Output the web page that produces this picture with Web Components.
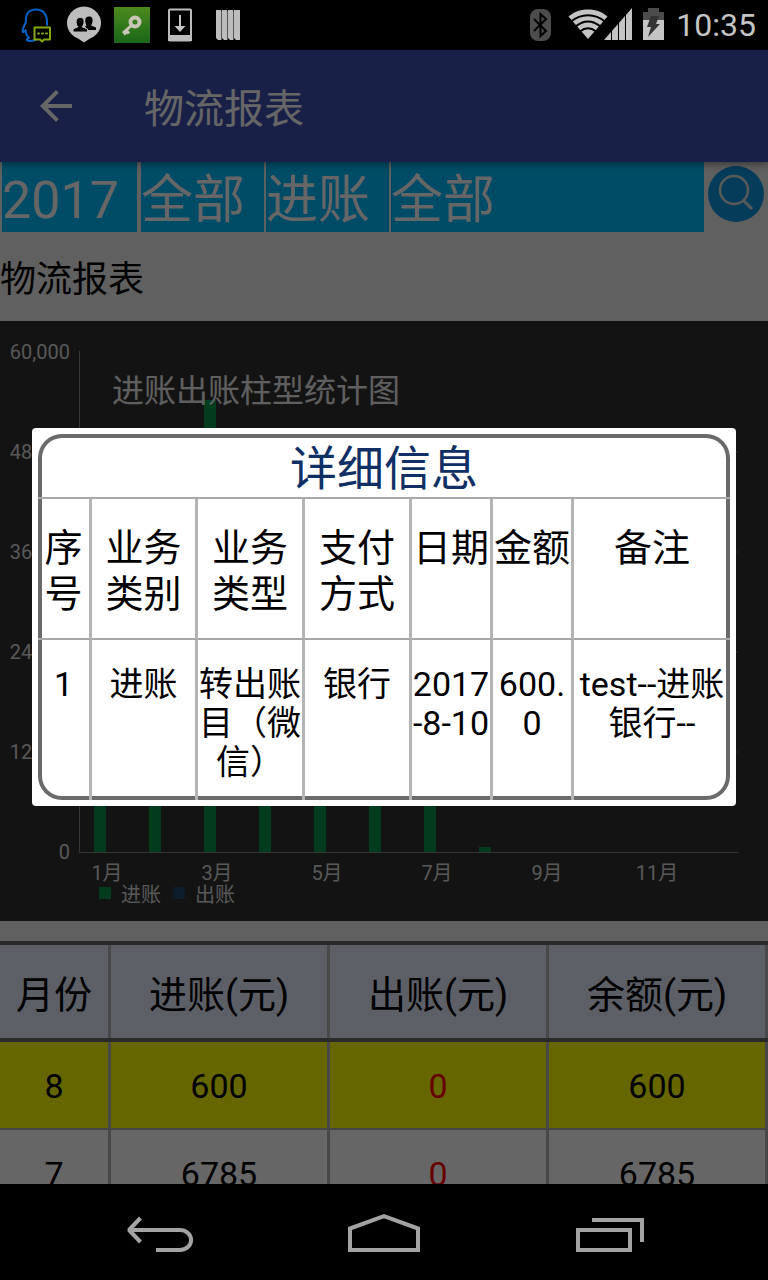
<!DOCTYPE html>
<html lang="zh-CN">
<head>
<meta charset="utf-8">
<meta name="viewport" content="width=device-width, initial-scale=1">
<title>物流报表</title>
<style>
  html, body { margin: 0; height: 100%; background: #000; }
  body { font-family: Roboto, "Noto Sans CJK SC", sans-serif; color: #000; }
</style>
</head>
<body>
<phone-screen>
  <status-bar slot="status">10:35</status-bar>
  <app-bar>物流报表</app-bar>
  <filter-bar></filter-bar>
  <section-title>物流报表</section-title>
  <bar-chart></bar-chart>
  <summary-table></summary-table>
  <detail-dialog slot="dialog">详细信息</detail-dialog>
  <nav-bar slot="nav"></nav-bar>
</phone-screen>

<script>
function define(name, html) {
  const template = document.createElement('template');
  template.innerHTML = html;
  customElements.define(name, class extends HTMLElement {
    constructor() {
      super();
      this.attachShadow({ mode: 'open' }).append(template.content.cloneNode(true));
    }
  });
}

define('phone-screen', `
<style>
  :host { display: flex; flex-direction: column; height: 100vh; overflow: hidden; }
  main { flex: 1; min-height: 0; position: relative; overflow: hidden; background: #efefef; }
</style>
<slot name="status"></slot>
<main><slot></slot><slot name="dialog"></slot></main>
<slot name="nav"></slot>`);

define('status-bar', `
<style>
  :host { display: flex; align-items: center; justify-content: space-between; height: 50px; padding: 0 12px; background: #000; color: #c4c4c4; }
  div { display: flex; align-items: center; }
  .system { gap: 10px; }
  svg { display: block; }
  time { font-size: 32px; line-height: 50px; }
</style>
<div>
  <svg width="48" height="50" fill="none" stroke-linecap="round" stroke-linejoin="round">
    <path d="M14 22C13 14 17 9.500 24 9.500s11 5 11 12M14 22c-1 2-3 5-3.500 9 0 2 1.500 1 3-1 0 4 1.500 6 3.500 8-3 1-3 3 1 3 2 0 4-.5 6-1.500M35 21v4" stroke="#0a61c4" stroke-width="2"/>
    <path d="M22.500 27.500h15.500v12h-6l-2 2-2-2h-5.500z" stroke="#85a80c" stroke-width="2"/>
    <path d="M26 33.500h1M30 33.500h1M34 33.500h1" stroke="#85a80c" stroke-width="2"/>
  </svg>
  <svg width="48" height="50">
    <path d="M24 42.500l-6-4A17 16.500 0 1 1 30 38.500z" fill="#bdbdbd"/>
    <path d="M29 16.500c3 0 4 2 3.500 5-.3 2-1 3-1.500 4l5 2v2.500h-8l-3-3.500 1.500-1c-1.500-3-2.500-9 2.500-9z" fill="#000"/>
    <path d="M20 17.500c4 0 4.500 3 3.800 6-.3 1.500-1 2.500-1.800 3.300l5.500 2.200V32H13v-3l5-2.200c-3-3-2.500-9.300 2-9.300z" fill="#000" stroke="#bdbdbd" stroke-width="1"/>
  </svg>
  <svg width="48" height="50">
    <defs><linearGradient id="g" x2="0" y2="1"><stop stop-color="#4d8a1f"/><stop offset="1" stop-color="#196718"/></linearGradient></defs>
    <path d="M6 7h36v36H6z" fill="url(#g)"/>
    <g fill="none" stroke="#c9c6b8"><circle cx="27" cy="22" r="4.500" stroke-width="4"/><path d="M24 25l-9 8M18 30l3 3.500M15.500 31.500l2.500 3" stroke-width="3"/></g>
  </svg>
  <svg width="48" height="50" fill="none">
    <rect x="13" y="9.500" width="22" height="31" rx="1" stroke="#bdbdbd" stroke-width="2"/>
    <path d="M12 35h24v6H12z" fill="#bdbdbd"/>
    <path d="M24 15v11" stroke="#c4c4c4" stroke-width="2"/>
    <path d="M18.500 26h11L24 32z" fill="#c4c4c4"/>
  </svg>
  <svg width="48" height="50">
    <path d="M12 10h5v30h-3l-2-2zM18 10h5v30h-3l-2-2zM24 10h5v30h-3l-2-2zM30 10h6v30h-4l-2-2z" fill="#bdbdbd"/>
    <path d="M17.500 11v29M23.500 11v29M29.500 11v29" stroke="#555"/>
  </svg>
</div>
<div class="system">
  <svg width="30" height="50">
    <rect x="2" y="9" width="21" height="32" rx="8" fill="#4c4c4c"/>
    <path d="M6 19l12 12-5.500 5V14l5.500 5L6 31" fill="none" stroke="#000" stroke-width="2"/>
  </svg>
  <svg width="64" height="50">
    <path d="M20 39L.5 16.500C6 12 12 9.500 20 9.500s14 2.500 19.500 7z" fill="#c4c4c4"/>
    <path d="M3 21.500c10-8.500 24-8.500 34 0M7.500 26.500c8-6.500 17-6.500 25 0M12 31.500c5-4 11-4 16 0" fill="none" stroke="#000" stroke-width="2"/>
    <path d="M64 8v32H36z" fill="#c4c4c4"/>
    <path d="M43.500 28v12M50.500 20v20M57.500 12v28" stroke="#000" stroke-width="1"/>
  </svg>
  <svg width="24" height="50">
    <path d="M1 12h5V8h11v4h5v28H1z" fill="#4c4c4c"/>
    <path d="M1 20h21v20H1z" fill="#c4c4c4"/>
    <path d="M9 16h8l-3 8h4L6 37l3-10H5z" fill="#333"/>
  </svg>
  <time><slot></slot></time>
</div>`);

define('app-bar', `
<style>
  :host { display: flex; align-items: center; position: relative; z-index: 1; height: 112px; padding: 0 32px; gap: 64px; background: #3f51b5; color: #fff; box-shadow: 0 2px 8px rgba(0, 0, 0, .45); }
  button { display: block; width: 48px; height: 48px; padding: 0; border: 0; background: none; color: inherit; }
  svg { display: block; }
  h1 { margin: 0; padding-top: 8px; font-size: 40px; line-height: 48px; font-weight: 400; }
</style>
<button aria-label="返回"><svg width="48" height="48" viewBox="0 0 24 24" fill="currentColor"><path d="M20 11H7.830l5.590-5.590L12 4l-8 8 8 8 1.410-1.410L7.830 13H20v-2z"/></svg></button>
<h1><slot></slot></h1>`);

define('filter-bar', `
<style>
  :host { display: grid; grid-template-columns: 137px 123px 123px 1fr 60px; gap: 2px; padding: 0 2px; height: 70px; }
  select { appearance: none; box-sizing: border-box; width: 100%; min-width: 0; height: 70px; margin: 0; padding: 8px 0 0; border: 0; border-radius: 0; background: #00bfff; color: #fff; font: 52px/62px Roboto, "Noto Sans CJK SC", sans-serif; }
  select:first-of-type { border-right: 2px solid #efefef; }
  button { height: 64px; padding: 4px 2px; border: 0; background: none; }
  svg { display: block; }
</style>
<select aria-label="年份"><option>2017</option></select>
<select aria-label="月份"><option>全部</option></select>
<select aria-label="类别"><option>进账</option></select>
<select aria-label="类型"><option>全部</option></select>
<button aria-label="查询"><svg width="56" height="56" fill="none"><circle cx="28" cy="28" r="28" fill="#0b96e2"/><g stroke="#dedede" stroke-width="2.500"><circle cx="26" cy="24" r="14"/><path d="M35 34l9 9" stroke-width="3"/></g></svg></button>`);

define('section-title', `
<style>
  :host { display: block; }
  h2 { margin: 0; padding-top: 8px; font-size: 36px; line-height: 81px; font-weight: 400; }
</style>
<h2><slot></slot></h2>`);

customElements.define('bar-chart', class extends HTMLElement {
  connectedCallback() {
    const income = [22000, 14000, 54200, 18500, 16000, 12500, 6785, 600];
    const base = 531, scale = 500 / 60000;
    const bars = income.map((v, i) => {
      const h = Math.max(4, Math.round(v * scale));
      return `<rect x="${94 + i * 55}" y="${base - h}" width="12" height="${h}" fill="#08944f"/>`;
    }).join('');
    const rows = ['0', '12,000', '24,000', '36,000', '48,000', '60,000'].map((t, i) =>
      `<text x="70" y="${538 - i * 100}" text-anchor="end">${t}</text>` +
      (i && i < 5 ? `<path d="M736 ${base - i * 100}h2" stroke="#666"/>` : '')).join('');
    const months = [1, 3, 5, 7, 9, 11].map((m, i) =>
      `<text x="${107 + i * 110}" y="559" text-anchor="middle">${m}月</text>`).join('');
    this.attachShadow({ mode: 'open' }).innerHTML = `
<style>
  :host { display: block; background: #303030; }
  svg { display: block; width: 100%; height: auto; font-size: 20px; fill: #dcdcdc; }
  .title { font-size: 32px; fill: #eee; }
</style>
<svg viewBox="0 0 768 600" role="img" aria-label="进账出账柱型统计图">
  <path d="M79.500 30v501.500H738" fill="none" stroke="#888"/>
  ${bars}${rows}${months}
  <text class="title" x="112" y="81">进账出账柱型统计图</text>
  <path d="M99 566h12v12H99z" fill="#08944f"/><text x="121" y="581">进账</text>
  <path d="M173 566h12v12h-12z" fill="#20486e"/><text x="195" y="581">出账</text>
</svg>`;
  }
});

define('summary-table', `
<style>
  :host { display: block; margin-top: 20px; }
  table { width: 100%; table-layout: fixed; border-collapse: separate; border-spacing: 0; text-align: center; background: #fff; }
  .month { width: 111px; }
  th, td { box-sizing: border-box; padding: 2px 3px 0 0; background: linear-gradient(#b4b4b4, #b4b4b4) right / 3px 100% no-repeat; }
  th { height: 101px; padding-top: 0; border-top: 4px solid #6a6a6a; border-bottom: 4px solid #6a6a6a; background-color: #e6edff; font-size: 38px; font-weight: 400; }
  td { height: 88px; border-bottom: 2px solid #b0b0b0; font-size: 34px; }
  .current td { background-color: #ff0; }
  td:nth-child(3) { color: #f00; }
</style>
<table>
  <colgroup><col class="month"><col><col><col></colgroup>
  <thead><tr><th scope="col">月份</th><th scope="col">进账(元)</th><th scope="col">出账(元)</th><th scope="col">余额(元)</th></tr></thead>
  <tbody>
    <tr class="current"><td>8</td><td>600</td><td>0</td><td>600</td></tr>
    <tr><td>7</td><td>6785</td><td>0</td><td>6785</td></tr>
  </tbody>
</table>`);

define('detail-dialog', `
<style>
  :host { display: flex; align-items: center; position: absolute; inset: 0; z-index: 2; padding: 0 32px; background: rgba(0, 0, 0, .6); }
  section { flex: 1; min-width: 0; padding: 6px; border-radius: 4px; background: #fff; }
  .frame { border-radius: 24px; box-shadow: inset 0 0 0 4px #6a6a6a; }
  h2 { margin: 0; padding-top: 6px; border-bottom: 2px solid #a8a8a8; color: #0f2f65; font-size: 47px; line-height: 57px; font-weight: 400; text-align: center; }
  table { width: 100%; table-layout: fixed; border-collapse: separate; border-spacing: 0; text-align: center; }
  .no { width: 54px; }
  .kind { width: 106px; }
  .wide { width: 107px; }
  .short { width: 81px; }
  th, td { box-sizing: border-box; padding: 0; border-right: 3px solid #b4b4b4; vertical-align: top; font-weight: 400; overflow-wrap: anywhere; }
  th:last-child, td:last-child { border-right: 0; }
  th { height: 141px; padding-top: 26px; border-bottom: 2px solid #a8a8a8; font-size: 38px; line-height: 46px; }
  td { height: 160px; padding-top: 25px; font-size: 34px; line-height: 39px; }
</style>
<section role="dialog" aria-labelledby="title">
  <div class="frame">
    <h2 id="title"><slot></slot></h2>
    <table>
      <colgroup><col class="no"><col class="kind"><col class="wide"><col class="wide"><col class="short"><col class="short"><col></colgroup>
      <thead><tr><th scope="col">序号</th><th scope="col">业务<br>类别</th><th scope="col">业务<br>类型</th><th scope="col">支付<br>方式</th><th scope="col">日期</th><th scope="col">金额</th><th scope="col">备注</th></tr></thead>
      <tbody><tr><td>1</td><td>进账</td><td>转出账目（微信）</td><td>银行</td><td>2017<wbr>-8-10</td><td>600.<wbr>0</td><td>test--进账银行--</td></tr></tbody>
    </table>
  </div>
</section>`);

define('nav-bar', `
<style>
  :host { display: flex; height: 96px; padding: 0 48px; background: #000; }
  button { flex: 1; display: flex; align-items: center; justify-content: center; padding: 0; border: 0; background: none; color: #a3a3a3; }
  svg { display: block; fill: none; stroke: currentColor; stroke-width: 4; }
</style>
<button aria-label="返回"><svg width="80" height="96"><path d="M9 46h51a10 9 0 0 1 0 20H36"/><path d="M20.500 34L9 46l11.500 12" stroke-linejoin="bevel"/></svg></button>
<button aria-label="主页"><svg width="80" height="96"><path d="M6 66V44.500l34-12.300 34 12.300V66z"/></svg></button>
<button aria-label="最近任务"><svg width="80" height="96"><path d="M10 46h52v20H10zM24 36h50v22"/></svg></button>`);
</script>
</body>
</html>
